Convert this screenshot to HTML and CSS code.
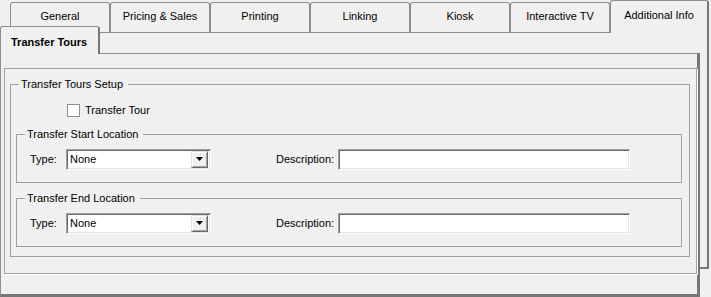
FILE: index.html
```html
<!DOCTYPE html>
<html>
<head>
<meta charset="utf-8">
<link rel="stylesheet" href="styles.css">
</head>
<body>
<div class="window">
  <div class="tabstrip">
    <div class="tab">General</div>
    <div class="tab">Pricing &amp; Sales</div>
    <div class="tab">Printing</div>
    <div class="tab">Linking</div>
    <div class="tab">Kiosk</div>
    <div class="tab">Interactive TV</div>
    <div class="tab tab-active">Additional Info</div>
  </div>
  <div class="page">
    <div class="inner">
      <div class="subtabs">
        <div class="subtab">Transfer Tours</div>
      </div>
      <div class="subpage">
        <div class="box">
          <fieldset class="group group-setup">
            <legend>Transfer Tours Setup</legend>
            <div class="check-row"><span class="checkbox"></span><span>Transfer Tour</span></div>
            <fieldset class="group group-loc group-start">
              <legend>Transfer Start Location</legend>
              <div class="field-row">
                <span class="lbl lbl-type">Type:</span>
                <div class="combo"><span class="combo-text">None</span><span class="combo-btn"><svg width="7" height="4" viewBox="0 0 7 4"><path d="M0 0H7L3.5 4Z" fill="#000"/></svg></span></div>
                <span class="lbl lbl-desc">Description:</span>
                <div class="textbox"></div>
              </div>
            </fieldset>
            <fieldset class="group group-loc group-end">
              <legend>Transfer End Location</legend>
              <div class="field-row">
                <span class="lbl lbl-type">Type:</span>
                <div class="combo"><span class="combo-text">None</span><span class="combo-btn"><svg width="7" height="4" viewBox="0 0 7 4"><path d="M0 0H7L3.5 4Z" fill="#000"/></svg></span></div>
                <span class="lbl lbl-desc">Description:</span>
                <div class="textbox"></div>
              </div>
            </fieldset>
          </fieldset>
        </div>
      </div>
    </div>
  </div>
</div>
</body>
</html>
```
FILE: styles.css
```css
* { box-sizing: border-box; }
html, body { margin: 0; padding: 0; }
body {
  background: #f0f0f0;
  font: 11px/13px "Liberation Sans", Arial, sans-serif;
  color: #000;
  overflow: hidden;
}
.window { width: 711px; height: 297px; }

.tabstrip {
  display: flex;
  align-items: flex-end;
  height: 32px;
  padding-left: 10px;
}
.tab {
  width: 100px;
  height: 30px;
  border: 1px solid #8e8e8e;
  border-bottom: 0;
  border-radius: 3px 3px 0 0;
  background: #f0f0f0;
  text-align: center;
  padding-top: 7px;
}
.tab-active {
  width: 99px;
  height: 33px;
  margin-bottom: -1px;
  position: relative;
  z-index: 1;
  border-right: 2px solid #777;
  padding-top: 8px;
}

.page {
  width: 709px;
  height: 237px;
  border: 1px solid #8e8e8e;
  border-right: 2px solid #777;
  border-bottom: 2px solid #777;
}
.inner {
  width: 700px;
  margin-top: -7px;
  margin-left: -1px;
}
.subtabs {
  height: 27px;
  display: flex;
  align-items: flex-end;
}
.subtab {
  width: 100px;
  height: 28px;
  margin-bottom: -1px;
  position: relative;
  z-index: 1;
  border: 1px solid #8e8e8e;
  border-right: 2px solid #777;
  border-bottom: 0;
  border-radius: 3px 3px 0 0;
  background: #f0f0f0;
  font-weight: bold;
  padding: 9px 0 0 10px;
}
.subpage {
  height: 244px;
  border: 1px solid #8e8e8e;
  border-right: 3px solid #777;
  border-bottom: 3px solid #777;
  background: #f0f0f0;
  padding: 14px 0 0 3px;
}
.box {
  width: 693px;
  height: 206px;
  border: 1px solid #a0a0a0;
  box-shadow: 1px 1px 0 #fff;
  padding: 8px 0 0 5px;
}

.group {
  margin: 0;
  padding: 0;
  border: 1px solid #a0a0a0;
  min-width: 0;
}
.group legend {
  padding: 0 5px 0 2px;
  margin-left: 8px;
  line-height: 14px;
}
.group-setup {
  width: 680px;
  padding: 13px 0 9px 0;
}
.check-row {
  display: flex;
  align-items: center;
  height: 13px;
  margin-left: 56px;
}
.checkbox {
  width: 13px;
  height: 13px;
  border: 1px solid #8f8f8f;
  background: #fff;
  margin-right: 5px;
}
.group-loc {
  width: 666px;
  margin-left: 5px;
  padding: 8px 0 12px 0;
}
.group-start { margin-top: 10px; }
.group-end { margin-top: 8px; }

.field-row {
  display: flex;
  align-items: center;
  height: 21px;
  padding-left: 13px;
}
.lbl-type { width: 36px; }
.lbl-desc { width: 62px; margin-left: 65px; }

.combo, .textbox {
  height: 21px;
  background: #fff;
  border-top: 1px solid #a0a0a0;
  border-left: 1px solid #a0a0a0;
  border-bottom: 1px solid #fff;
  border-right: 1px solid #fff;
  box-shadow: inset 1px 1px 0 #696969, inset -1px -1px 0 #e3e3e3;
}
.combo {
  width: 145px;
  display: flex;
  align-items: center;
  padding: 1px 2px 2px 3px;
}
.combo-text { flex: 1; }
.combo-btn {
  width: 17px;
  height: 17px;
  background: #f0f0f0;
  border-top: 1px solid #e3e3e3;
  border-left: 1px solid #e3e3e3;
  border-bottom: 1px solid #696969;
  border-right: 1px solid #696969;
  box-shadow: inset 1px 1px 0 #fff, inset -1px -1px 0 #a0a0a0;
  display: flex;
  align-items: center;
  justify-content: center;
}
.combo-btn svg { display: block; }
.textbox { width: 292px; }
```
